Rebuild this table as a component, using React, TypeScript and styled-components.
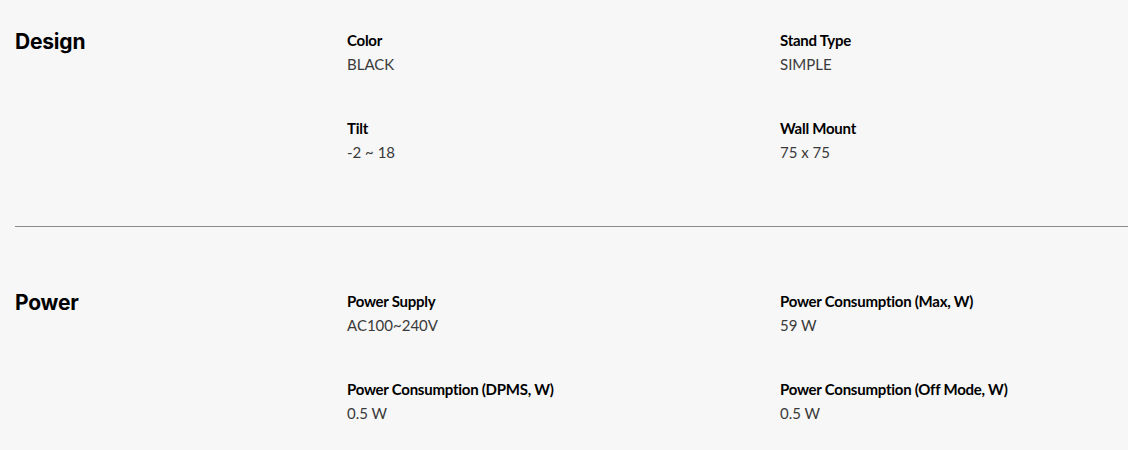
import React from "react";
import styled, { createGlobalStyle } from "styled-components";

const Global = createGlobalStyle`
  html, body { margin: 0; padding: 0; background: #f7f7f7; }
  body { font-family: Lato, "Liberation Sans", sans-serif; color: #000; }
`;

const Page = styled.div`
  padding-left: 15px;
  background: #f7f7f7;
  min-height: 450px;
`;

const Section = styled.section<{ $last?: boolean }>`
  display: flex;
  padding: ${(p) => (p.$last ? "62px 0 40px" : "28px 0 62px")};
  border-bottom: ${(p) => (p.$last ? "none" : "1px solid #8a8a8a")};
`;

const Heading = styled.h2`
  width: 332px;
  flex: none;
  margin: 0;
  font-family: Inter, sans-serif;
  font-weight: 700;
  font-size: 21px;
  line-height: 28px;
  letter-spacing: -0.2px;
`;

const Grid = styled.div`
  display: grid;
  grid-template-columns: 433px 1fr;
  row-gap: 40px;
`;

const Item = styled.div`
  display: flex;
  flex-direction: column;
`;

const Label = styled.div`
  font-weight: 700;
  font-size: 15px;
  line-height: 24px;
  letter-spacing: -0.25px;
  color: #000;
`;

const Value = styled.div`
  font-weight: 400;
  font-size: 15px;
  line-height: 24px;
  color: #3a3a3a;
`;

const data = [
  {
    title: "Design",
    items: [
      ["Color", "BLACK"],
      ["Stand Type", "SIMPLE"],
      ["Tilt", "-2 ~ 18"],
      ["Wall Mount", "75 x 75"],
    ],
  },
  {
    title: "Power",
    items: [
      ["Power Supply", "AC100~240V"],
      ["Power Consumption (Max, W)", "59 W"],
      ["Power Consumption (DPMS, W)", "0.5 W"],
      ["Power Consumption (Off Mode, W)", "0.5 W"],
    ],
  },
];

export default function App() {
  return (
    <>
      <Global />
      <Page>
        {data.map((s, i) => (
          <Section key={s.title} $last={i === data.length - 1}>
            <Heading>{s.title}</Heading>
            <Grid>
              {s.items.map(([l, v]) => (
                <Item key={l}>
                  <Label>{l}</Label>
                  <Value>{v}</Value>
                </Item>
              ))}
            </Grid>
          </Section>
        ))}
      </Page>
    </>
  );
}
